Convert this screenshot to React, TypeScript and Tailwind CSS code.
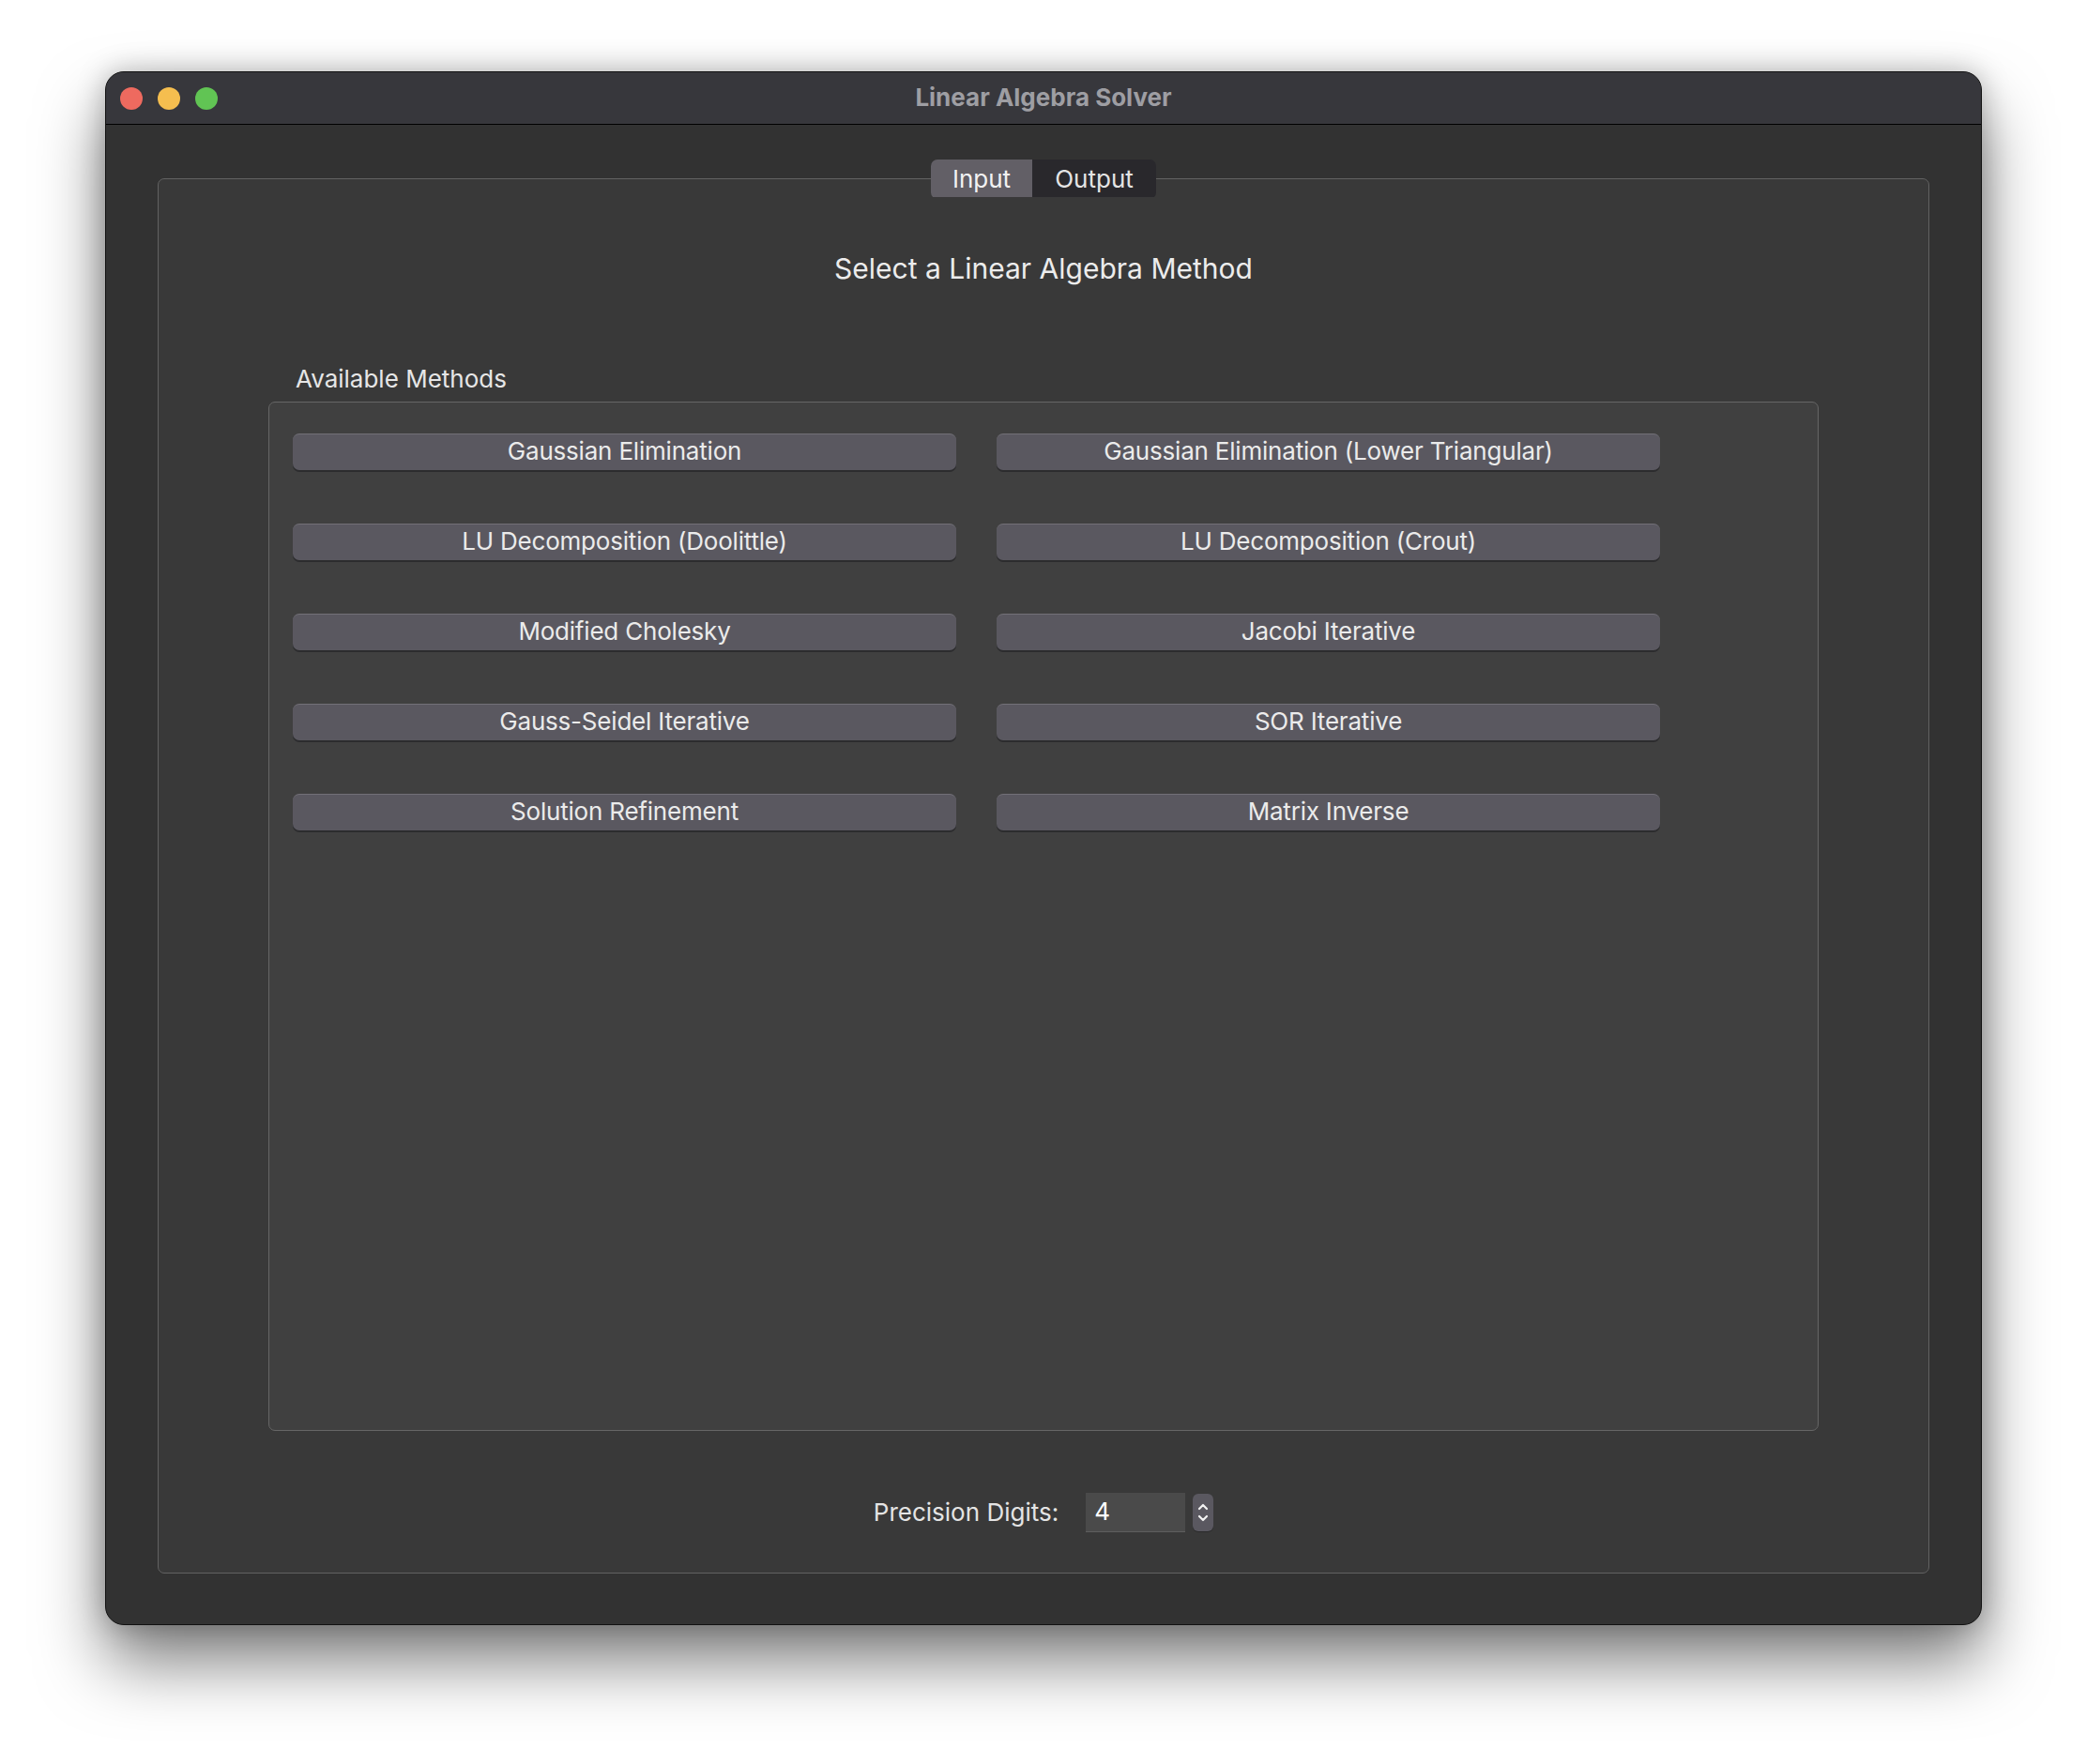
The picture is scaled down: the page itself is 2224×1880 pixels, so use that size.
import React from "react";

const methods: [string, string][] = [
  ["Gaussian Elimination", "Gaussian Elimination (Lower Triangular)"],
  ["LU Decomposition (Doolittle)", "LU Decomposition (Crout)"],
  ["Modified Cholesky", "Jacobi Iterative"],
  ["Gauss-Seidel Iterative", "SOR Iterative"],
  ["Solution Refinement", "Matrix Inverse"],
];

function MethodButton({ label }: { label: string }) {
  return (
    <button className="h-[39px] w-full rounded-[7px] bg-[#5a5860] border-t border-t-[#727077] shadow-[0_2px_0_0_#2c2c2e] pb-[2px] text-[26px] leading-[34px] text-[#ebebeb] tracking-[-0.2px]">
      {label}
    </button>
  );
}

export default function App() {
  return (
    <div
      className="min-h-[1880px] w-[2224px] bg-white pl-[112px] pt-[76px]"
      style={{ fontFamily: "Inter, 'Noto Sans', sans-serif" }}
    >
      <div className="flex h-[1656px] w-[2000px] flex-col overflow-hidden rounded-[20px] border border-[#111] bg-[#323232] shadow-[0_40px_70px_rgba(0,0,0,0.5),0_0_30px_rgba(0,0,0,0.25)]">
        {/* Title bar */}
        <div className="relative flex h-[56px] shrink-0 items-center border-b border-b-black bg-[#37373c] px-[15px]">
          <div className="flex gap-[16px]">
            <span className="h-[24px] w-[24px] rounded-full bg-[#ee6a5f]" />
            <span className="h-[24px] w-[24px] rounded-full bg-[#f5be4f]" />
            <span className="h-[24px] w-[24px] rounded-full bg-[#61c454]" />
          </div>
          <div className="pointer-events-none absolute inset-0 flex items-center justify-center pb-[3px] text-[26px] font-bold text-[#9e9ea3]">
            Linear Algebra Solver
          </div>
        </div>

        {/* Content */}
        <div className="flex flex-1 flex-col px-[55px] pt-[37px] pb-[54px]">
          {/* Tabs */}
          <div className="relative z-10 flex justify-center">
            <div className="flex h-[42px] overflow-hidden rounded-[7px] pb-[2px] text-[26px]">
              <div className="flex w-[108px] items-center justify-center bg-[#625f66] text-[#f2f2f2]">
                Input
              </div>
              <div className="flex w-[132px] items-center justify-center bg-[#29282c] text-[#e4e4e4]">
                Output
              </div>
            </div>
          </div>

          {/* Pane */}
          <div className="-mt-[22px] flex flex-1 flex-col rounded-[7px] border border-[#626262] bg-[#393939] px-[117px]">
            <div className="mt-[75px] text-center text-[30px] leading-[40px] text-[#ececec]">
              Select a Linear Algebra Method
            </div>

            <div className="mt-[82px] pl-[29px] text-[26px] leading-[32px] text-[#e6e6e6]">
              Available Methods
            </div>

            <div className="mt-[8px] h-[1097px] rounded-[7px] border border-[#666] bg-[#404040] pl-[25px] pt-[33px]">
              <div className="grid w-[1457px] grid-cols-2 gap-x-[43px] gap-y-[57px]">
                {methods.map(([a, b]) => (
                  <React.Fragment key={a}>
                    <MethodButton label={a} />
                    <MethodButton label={b} />
                  </React.Fragment>
                ))}
              </div>
            </div>

            {/* Precision */}
            <div className="mt-[66px] flex items-center justify-center">
              <span className="mr-[29px] pb-[2px] text-[26px] text-[#e4e4e4]">Precision Digits:</span>
              <div className="flex h-[42px] w-[106px] items-center border-b border-b-[#5e5e5e] bg-[#4a4a4a] pb-[2px] pl-[9px] text-[26px] text-white">
                4
              </div>
              <div className="ml-[8px] flex h-[40px] w-[22px] items-center justify-center rounded-[6px] bg-[#5a5860] shadow-[0_1px_0_0_#2a2a2a]">
                <svg width="12" height="26" viewBox="0 0 12 26" fill="none" stroke="#f2f2f2" strokeWidth="2.2" strokeLinecap="round" strokeLinejoin="round">
                  <path d="M2 9 L6 5 L10 9" />
                  <path d="M2 17 L6 21 L10 17" />
                </svg>
              </div>
            </div>
          </div>
        </div>
      </div>
    </div>
  );
}
